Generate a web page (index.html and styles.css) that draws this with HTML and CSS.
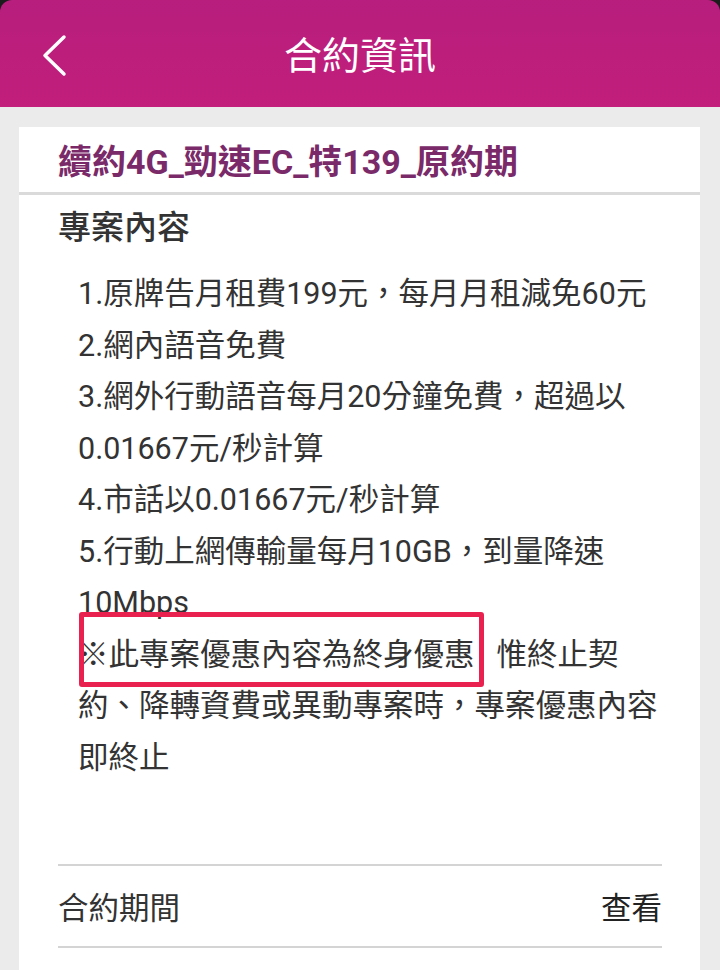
FILE: index.html
```html
<!DOCTYPE html>
<html lang="zh-Hant">
<head>
    <meta charset="UTF-8">
    <meta name="viewport" content="width=device-width, initial-scale=1.0">
    <title>合約資訊</title>
    <link rel="stylesheet" href="styles.css">
</head>
<body>
    <div class="topbar-wrap">
        <header class="topbar">
            <a href="#" class="back" aria-label="返回">
                <svg width="30" height="44" viewBox="0 0 30 44">
                    <polyline points="22,4 3,22.5 22,41" fill="none" stroke="#fff" stroke-width="3.5" stroke-linecap="round" stroke-linejoin="round"/>
                </svg>
            </a>
            <h1>合約資訊</h1>
        </header>
    </div>

    <main class="page">
        <section class="card">
            <div class="plan-name">續約4G_勁速EC_特139_原約期</div>

            <div class="plan-body">
                <h2>專案內容</h2>
                <div class="plan-items">
                    <p>1.原牌告月租費199元，每月月租減免60元</p>
                    <p>2.網內語音免費</p>
                    <p>3.網外行動語音每月20分鐘免費，超過以0.01667元/秒計算</p>
                    <p>4.市話以0.01667元/秒計算</p>
                    <p>5.行動上網傳輸量每月10GB，到量降速10Mbps</p>
                    <p><span class="mark">※此專案優惠內容為終身優惠</span><span class="gap"></span>惟終止契約、降轉資費或異動專案時，專案優惠內容即終止</p>
                </div>

                <div class="info-row">
                    <span>合約期間</span>
                    <a href="#" class="link">查看</a>
                </div>
            </div>
        </section>
    </main>
</body>
</html>
```

FILE: styles.css
```css
body {
    margin: 0;
    background: #ebebeb;
    font-family: Roboto, "Noto Sans CJK TC", sans-serif;
    color: #333;
}
.topbar-wrap {
    background: #1c1c1c;
}
.topbar {
    height: 107px;
    display: flex;
    align-items: center;
    justify-content: center;
    position: relative;
    background: linear-gradient(#b71e7d, #c21e7b);
    border-radius: 12px 12px 0 0;
}
.topbar h1 {
    margin: 0;
    color: #fff;
    font-size: 38px;
    font-weight: 400;
    padding-bottom: 2px;
}
.back {
    position: absolute;
    left: 42px;
    top: 33px;
    display: flex;
}
.page {
    padding: 20px 20px 0 19px;
}
.card {
    background: #fff;
    min-height: 860px;
}
.plan-name {
    height: 65px;
    display: flex;
    align-items: center;
    padding-left: 39px;
    color: #7a2a69;
    font-size: 34px;
    font-weight: 700;
    border-bottom: 3px solid #dadada;
}
.plan-body {
    padding: 0 38px 0 39px;
}
.plan-body h2 {
    margin: 0;
    padding-top: 10px;
    line-height: 46px;
    font-size: 33px;
    font-weight: 500;
    color: #333;
}
.plan-items {
    margin-top: 17px;
    padding-left: 20px;
    font-size: 30.5px;
    line-height: 51.5px;
}
.plan-items p {
    margin: 0;
}
.mark {
    display: inline-block;
    position: relative;
}
/* red annotation frame */
.mark::after {
    content: "";
    position: absolute;
    left: 1px;
    right: -9px;
    top: -17px;
    bottom: -7px;
    border: 5px solid #e8214e;
    border-radius: 3px;
}
.gap {
    display: inline-block;
    width: 22px;
}
.info-row {
    margin-top: 81px;
    height: 80px;
    display: flex;
    align-items: center;
    justify-content: space-between;
    border-top: 2px solid #d4d4d4;
    border-bottom: 2px solid #d4d4d4;
    font-size: 30.5px;
}
.link {
    color: #222;
    text-decoration: none;
}
```
